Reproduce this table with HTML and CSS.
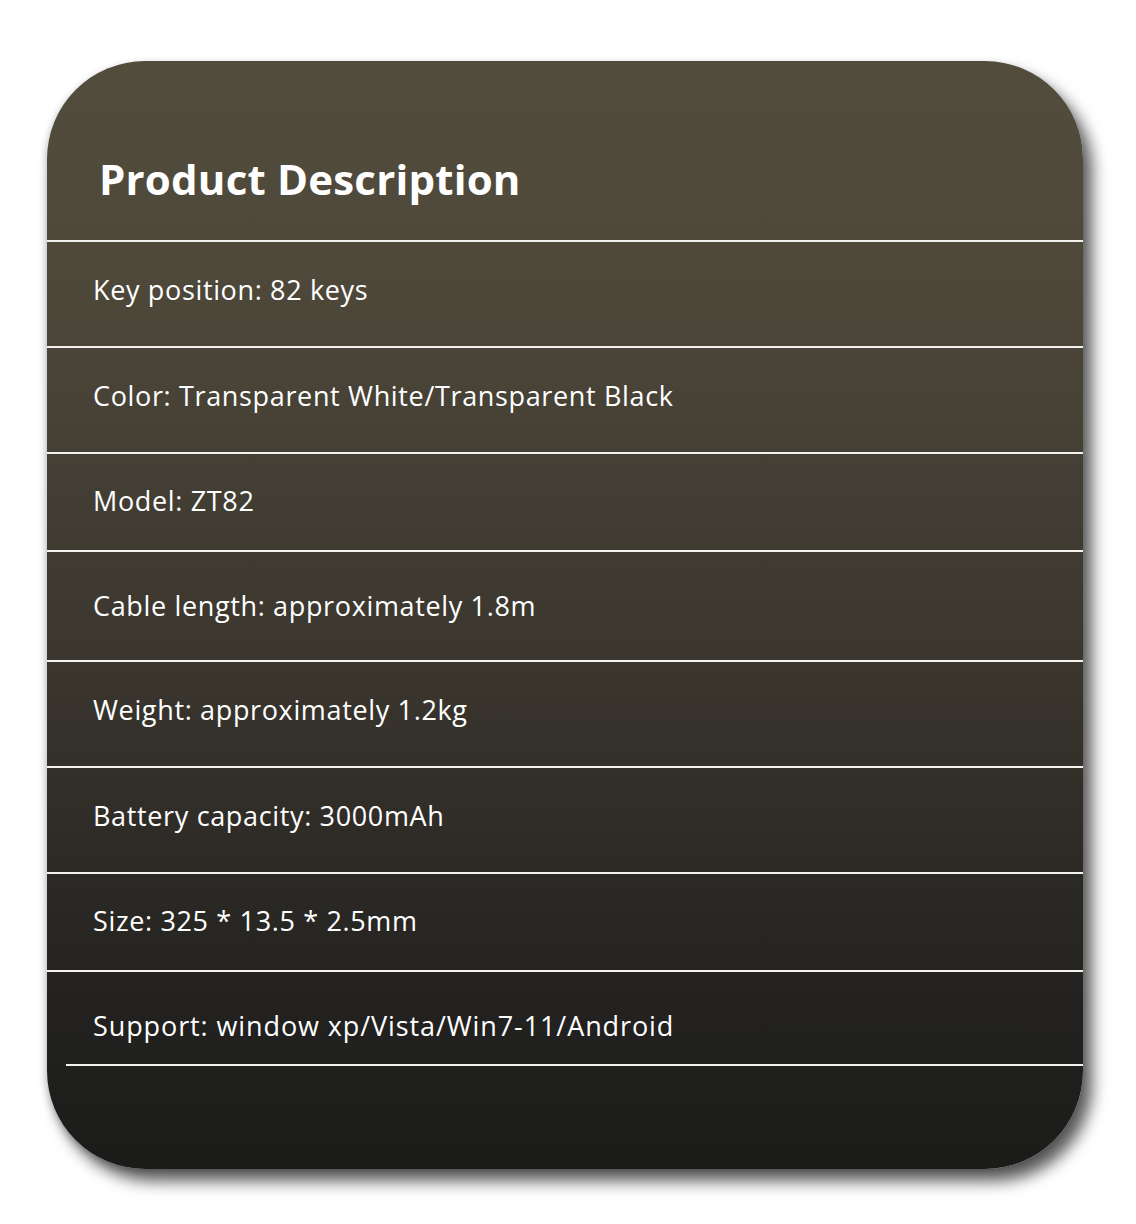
FILE: index.html
```html
<!DOCTYPE html>
<html lang="en">
<head>
<meta charset="utf-8">
<title>Product Description</title>
<link rel="stylesheet" href="styles.css">
</head>
<body>
<div class="page">
  <section class="card">
    <header class="card-head">
      <h1 class="card-title">Product Description</h1>
    </header>
    <ul class="specs">
      <li class="spec">Key position: 82 keys</li>
      <li class="spec">Color: Transparent White/Transparent Black</li>
      <li class="spec spec--short">Model: ZT82</li>
      <li class="spec spec--tall">Cable length: approximately 1.8m</li>
      <li class="spec">Weight: approximately 1.2kg</li>
      <li class="spec">Battery capacity: 3000mAh</li>
      <li class="spec spec--short">Size: 325 * 13.5 * 2.5mm</li>
      <li class="spec spec--last">Support: window xp/Vista/Win7-11/Android</li>
    </ul>
  </section>
</div>
</body>
</html>
```
FILE: styles.css
```css
html, body {
  margin: 0;
  padding: 0;
  background: #ffffff;
}

.page {
  padding: 61px 0 0 47px;
  height: 1163px;
}

.card {
  width: 1036px;
  height: 1108px;
  border-radius: 98px;
  background: linear-gradient(180deg, #524c3d 0%, #4f493b 18%, #3a362e 55%, #232220 85%, #1b1b1a 100%);
  box-shadow: 9px 12px 16px rgba(0, 0, 0, 0.66), -2px 2px 6px rgba(0, 0, 0, 0.15);
  overflow: hidden;
  font-family: "Open Sans", "Noto Sans", sans-serif;
  color: #ffffff;
}

.card-head {
  height: 179px;
  border-bottom: 2px solid #f4f2ee;
}

.card-title {
  margin: 0;
  padding: 89px 0 0 52px;
  font-size: 42px;
  line-height: 58px;
  font-weight: 700;
  letter-spacing: 0.2px;
}

.specs {
  list-style: none;
  margin: 0;
  padding: 0;
}

.spec {
  height: 74px;
  padding: 30px 0 0 46px;
  border-bottom: 2px solid #f4f2ee;
  font-size: 27px;
  line-height: 36px;
  letter-spacing: 0.65px;
}

.spec--short {
  height: 67px;
  padding-top: 29px;
}

.spec--tall {
  height: 72px;
  padding-top: 36px;
}

.spec--last {
  height: 56px;
  padding-top: 36px;
  margin-left: 19px;
  padding-left: 27px;
  letter-spacing: 0.9px;
}
```
